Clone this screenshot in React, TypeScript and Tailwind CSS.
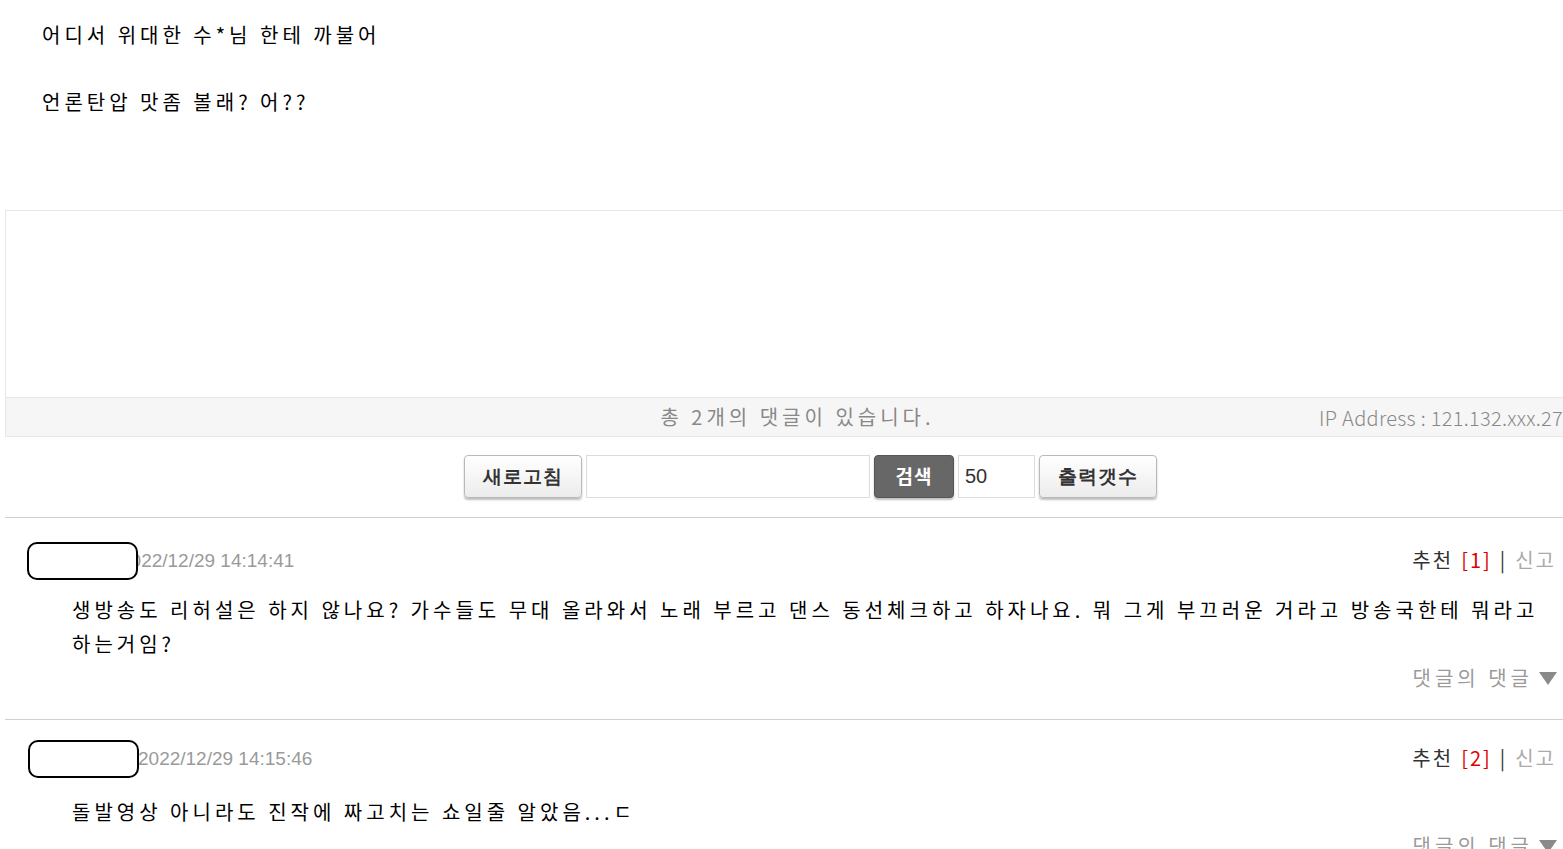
import React from "react";

const KR = "font-['Noto_Sans_CJK_KR',sans-serif]";

const ToolButton: React.FC<{ label: string; w: string }> = ({ label, w }) => (
	<button
		className={`${w} h-[43px] rounded-[4px] border border-[#b9b9b9] bg-gradient-to-b from-white to-[#ececec] text-[19px] font-bold text-[#333] tracking-[1px] shadow-[0_2px_2px_rgba(0,0,0,0.25)]`}
	>
		{label}
	</button>
);

type CommentProps = {
	date: string;
	dateShift: string;
	votes: number;
	lines: string[];
	boxShift: string;
	top: string;
	textGap: string;
};

const Comment: React.FC<CommentProps> = ({ date, dateShift, votes, lines, boxShift, top, textGap }) => (
	<div className={`border-b border-[#cfcfcf] ${top} pb-[24px]`}>
		{/* header: redacted nickname + date, vote/report on right */}
		<div className="flex items-center justify-between h-[38px] pr-[34px]">
			<div className={`relative flex items-center ${boxShift}`}>
				<div className="w-[111px] h-[38px] rounded-[10px] border-2 border-black bg-white z-10" />
				<span className={`${dateShift} font-['Liberation_Sans',sans-serif] text-[19px] text-[#9a9a9a]`}>
					{date}
				</span>
			</div>
			<div className={`${KR} text-[20px] tracking-[2px] flex items-center gap-[8px] -mt-[3px]`}>
				<span className="text-[#333]">추천</span>
				<span className="text-[#e00000]">[{votes}]</span>
				<span className="text-[#333]">|</span>
				<span className="text-[#aaa]">신고</span>
			</div>
		</div>
		<div className={`${KR} pl-[67px] pr-[20px] ${textGap} text-[20px] leading-[34px] tracking-[4px] text-black`}>
			{lines.map((l, i) => (
				<div key={i}>{l}</div>
			))}
		</div>
		<div className={`${KR} flex justify-end items-center pr-[32px] text-[20px] leading-[34px] text-[#9a9a9a] tracking-[4px]`}>
			댓글의 댓글
			<svg width="20" height="16" viewBox="0 0 20 16" className="ml-[5px]">
				<path d="M1 2 H19 L10 15 Z" fill="#8a8a8a" />
			</svg>
		</div>
	</div>
);

export default function App() {
	return (
		<div className="w-full overflow-hidden bg-white">
			<div className="w-[1585px] ml-[5px]">
				{/* article body */}
				<div className={`${KR} pl-[37px] pt-[18px] h-[210px] text-[20px] leading-[33.5px] tracking-[4px] text-black`}>
					<div>어디서 위대한 수*님 한테 까불어</div>
					<div>&nbsp;</div>
					<div>언론탄압 맛좀 볼래? 어??</div>
				</div>

				{/* empty embed box + comment count bar */}
				<div className="border border-[#e6e6e6]">
					<div className="h-[186px] bg-white" />
					<div className="relative h-[39px] border-t border-[#e6e6e6] bg-[#f6f6f6] flex items-center justify-center">
						<span className={`${KR} text-[20px] text-[#888] tracking-[4px]`}>
							총 2개의 댓글이 있습니다.
						</span>
						<span className={`${KR} absolute right-[26px] top-[5px] text-[20px] font-light text-[#888] tracking-[0.3px]`}>
							IP Address : 121.132.xxx.27
						</span>
					</div>
				</div>

				{/* toolbar */}
				<div className="flex justify-center items-center gap-[4px] pt-[18px] pb-[19px] border-b border-[#cfcfcf] pl-[26px]">
					<ToolButton label="새로고침" w="w-[118px]" />
					<input className="w-[284px] h-[43px] border border-[#dcdcdc] bg-white outline-none" />
					<button className={`${KR} w-[80px] h-[43px] rounded-[4px] bg-[#676767] border border-[#555] text-[19px] font-bold text-white tracking-[1px] shadow-[0_2px_2px_rgba(0,0,0,0.25)]`}>
						검색
					</button>
					<input
						defaultValue="50"
						className="w-[77px] h-[43px] border border-[#dcdcdc] bg-white px-[6px] font-['Liberation_Sans',sans-serif] text-[20px] text-[#333] outline-none"
					/>
					<ToolButton label="출력갯수" w="w-[118px]" />
				</div>

				<Comment
					top="pt-[24px]"
					textGap="mt-[13px]"
					boxShift="pl-[22px]"
					date="2022/12/29 14:14:41"
					dateShift="-ml-[18px]"
					votes={1}
					lines={[
						"생방송도 리허설은 하지 않나요? 가수들도 무대 올라와서 노래 부르고 댄스 동선체크하고 하자나요. 뭐 그게 부끄러운 거라고 방송국한테 뭐라고",
						"하는거임?",
					]}
				/>
				<Comment
					top="pt-[20px]"
					textGap="mt-[17px]"
					boxShift="pl-[23px]"
					date="2022/12/29 14:15:46"
					dateShift="-ml-[1px]"
					votes={2}
					lines={["돌발영상 아니라도 진작에 짜고치는 쇼일줄 알았음...ㄷ"]}
				/>
			</div>
		</div>
	);
}
